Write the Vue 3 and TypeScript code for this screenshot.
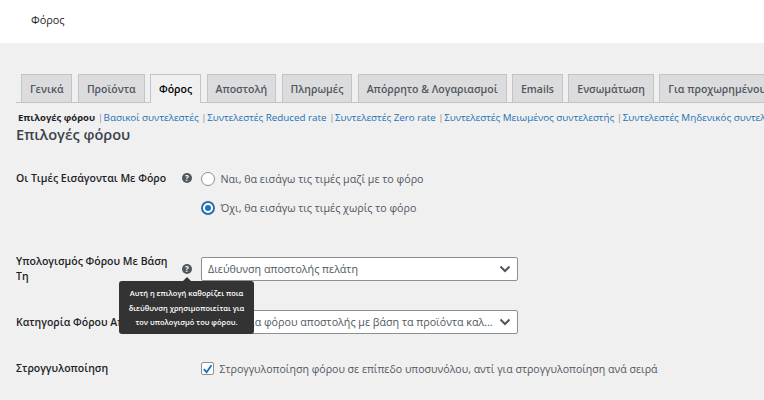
<script setup lang="ts">
const tabs = [
  { label: 'Γενικά' },
  { label: 'Προϊόντα' },
  { label: 'Φόρος', active: true },
  { label: 'Αποστολή' },
  { label: 'Πληρωμές' },
  { label: 'Απόρρητο & Λογαριασμοί' },
  { label: 'Emails' },
  { label: 'Ενσωμάτωση' },
  { label: 'Για προχωρημένους' },
]
const links = [
  'Βασικοί συντελεστές',
  'Συντελεστές Reduced rate',
  'Συντελεστές Zero rate',
  'Συντελεστές Μειωμένος συντελεστής',
  'Συντελεστές Μηδενικός συντελεστής',
]
</script>

<template>
  <div class="page">
    <header class="top"><span>Φόρος</span></header>
    <main class="content">
      <nav class="tabs">
        <a v-for="t in tabs" :key="t.label" class="tab" :class="{ active: t.active }">{{ t.label }}</a>
      </nav>
      <div class="subs">
        <b>Επιλογές φόρου</b>
        <span v-for="l in links" :key="l" class="sub"><i>|</i><a>{{ l }}</a></span>
      </div>
      <h2>Επιλογές φόρου</h2>

      <section class="row r1">
        <div class="label">Οι Τιμές Εισάγονται Με Φόρο</div>
        <span class="help">?</span>
        <div class="control radios">
          <label class="opt"><span class="radio"></span>Ναι, θα εισάγω τις τιμές μαζί με το φόρο</label>
          <label class="opt"><span class="radio on"></span>Όχι, θα εισάγω τις τιμές χωρίς το φόρο</label>
        </div>
      </section>

      <section class="row r2">
        <div class="label">Υπολογισμός Φόρου Με Βάση Τη</div>
        <span class="help">?</span>
        <div class="control">
          <div class="select">
            <span>Διεύθυνση αποστολής πελάτη</span>
            <svg width="12" height="8" viewBox="0 0 12 8"><path d="M1.5 1.5 6 6l4.5-4.5" fill="none" stroke="#50575e" stroke-width="2"/></svg>
          </div>
        </div>
        <div class="tooltip">Αυτή η επιλογή καθορίζει ποια διεύθυνση χρησιμοποιείται για τον υπολογισμό του φόρου.</div>
      </section>

      <section class="row r3">
        <div class="label">Κατηγορία Φόρου Αποστολής</div>
        <span class="help">?</span>
        <div class="control">
          <div class="select">
            <span>Κατηγορία φόρου αποστολής με βάση τα προϊόντα καλ...</span>
            <svg width="12" height="8" viewBox="0 0 12 8"><path d="M1.5 1.5 6 6l4.5-4.5" fill="none" stroke="#50575e" stroke-width="2"/></svg>
          </div>
        </div>
      </section>

      <section class="row r4">
        <div class="label">Στρογγυλοποίηση</div>
        <span></span>
        <div class="control">
          <label class="opt check-opt">
            <span class="check"><svg width="12" height="12" viewBox="0 0 12 12"><path d="M2 6.2 5 9.5 10.3 2" fill="none" stroke="#2271b1" stroke-width="2"/></svg></span>
            Στρογγυλοποίηση φόρου σε επίπεδο υποσυνόλου, αντί για στρογγυλοποίηση ανά σειρά
          </label>
        </div>
      </section>
    </main>
  </div>
</template>

<style>
html, body { margin: 0; overflow: hidden; background: #f0f0f1; }
</style>

<style scoped>
.page {
  width: 764px;
  height: 400px;
  overflow: hidden;
  background: #f0f0f1;
  font-family: "Open Sans", "Liberation Sans", sans-serif;
  color: #3c434a;
  font-size: 11px;
}
.top {
  height: 43px;
  background: #fff;
  display: flex;
  align-items: center;
  padding-left: 31px;
  padding-bottom: 5px;
  font-size: 10.9px;
  color: #1d2327;
  box-sizing: border-box;
}
.content { position: relative; padding: 31px 0 0 16px; }
.tabs {
  display: flex;
  gap: 5.6px;
  padding-left: 5px;
  height: 28px;
  border-bottom: 1px solid #c3c4c7;
  white-space: nowrap;
}
.tab {
  flex: none;
  height: 28px;
  box-sizing: border-box;
  padding: 0 7.9px;
  display: flex;
  align-items: center;
  background: #dcdcde;
  border: 1px solid #c3c4c7;
  border-bottom: none;
  color: #50575e;
  font-weight: 600;
  font-size: 10.5px;
}
.tab.active {
  background: #f0f0f1;
  color: #000;
  height: 29px;
}
.subs {
  display: flex;
  white-space: nowrap;
  height: 16px;
  margin: 7px 0 0 2px;
  line-height: 16px;
  font-size: 9.8px;
}
.subs b { color: #1d2327; font-weight: 700; font-size: 9.5px; }
.sub i { font-style: normal; color: #8c8f94; margin: 0 0.5px 0 2.6px; }
.sub a { color: #2271b1; }
h2 {
  margin: -2px 0 0;
  font-size: 14.6px;
  font-weight: 600;
  line-height: 20px;
  color: #3c434a;
}
.row {
  position: relative;
  display: grid;
  grid-template-columns: 164px 21px 1fr;
  align-items: center;
  width: 748px;
}
.label {
  font-size: 10.5px;
  font-weight: 600;
  line-height: 14.5px;
  color: #1d2327;
}
.help {
  width: 10px;
  height: 10px;
  margin-left: 2px;
  border-radius: 50%;
  background: #50575e;
  color: #fff;
  font-size: 8px;
  font-weight: 700;
  line-height: 10px;
  text-align: center;
}
.r1 { margin-top: 26px; align-items: start; }
.r1 .label { line-height: 17px; }
.r1 .help { margin-top: 3px; }
.r2 { margin-top: 38px; }
.r3 { margin-top: 27px; }
.r4 { margin-top: 26px; }
.radios { display: flex; flex-direction: column; gap: 12px; }
.opt {
  display: flex;
  align-items: center;
  gap: 5.5px;
  height: 17px;
  font-size: 10.7px;
  color: #50575e;
  white-space: nowrap;
}
.check-opt { font-size: 10.6px; }
.radio {
  width: 14px;
  height: 14px;
  border-radius: 50%;
  border: 1px solid #8c8f94;
  background: #fff;
  box-sizing: border-box;
  flex: none;
  position: relative;
}
.radio.on { border: 2px solid #2271b1; }
.radio.on::after {
  content: "";
  position: absolute;
  inset: 2px;
  border-radius: 50%;
  background: #2271b1;
}
.check {
  width: 13px;
  height: 13px;
  border: 1px solid #8c8f94;
  border-radius: 2px;
  background: #fff;
  box-sizing: border-box;
  display: flex;
  align-items: center;
  justify-content: center;
  flex: none;
}
.select {
  width: 317px;
  height: 24px;
  box-sizing: border-box;
  border: 1px solid #8c8f94;
  background: #fff;
  border-radius: 2px;
  padding: 0 6px;
  display: flex;
  align-items: center;
  justify-content: space-between;
  font-size: 10.7px;
  color: #50575e;
  white-space: nowrap;
}
.tooltip {
  position: absolute;
  left: 103px;
  top: 27px;
  width: 135px;
  height: 53px;
  box-sizing: border-box;
  padding: 5px 8px;
  background: #333;
  border-radius: 3px;
  color: #fff;
  font-size: 7.5px;
  font-weight: 600;
  line-height: 14.5px;
  text-align: center;
  z-index: 2;
}
.tooltip::before {
  content: "";
  position: absolute;
  left: 64px;
  top: -4px;
  border: 4px solid transparent;
  border-top: 0;
  border-bottom-color: #333;
}
</style>
